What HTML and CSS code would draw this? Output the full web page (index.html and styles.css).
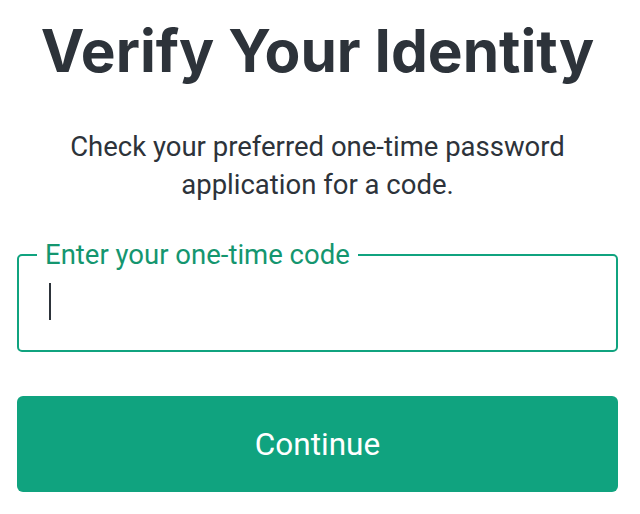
FILE: index.html
```html
<!DOCTYPE html>
<html lang="en">
<head>
  <meta charset="UTF-8" />
  <meta name="viewport" content="width=device-width, initial-scale=1.0"/>
  <title>Verify Your Identity</title>
  <link rel="stylesheet" href="styles.css">
</head>
<body>

  <div class="verify">
    <h1>Verify Your Identity</h1>
    <p class="hint">Check your preferred one-time password application for a code.</p>

    <fieldset class="code-field">
      <legend>Enter your one-time code</legend>
      <span class="caret"></span>
    </fieldset>

    <button class="continue">Continue</button>
  </div>

</body>
</html>
```

FILE: styles.css
```css
body {
  margin: 0;
  background: #ffffff;
  font-family: Roboto, "Liberation Sans", sans-serif;
}
.verify {
  display: flex;
  flex-direction: column;
  align-items: stretch;
  padding: 0 22px 0 17px;
}
h1 {
  margin: 16px 0 0;
  font-family: Inter, "Liberation Sans", sans-serif;
  font-weight: 700;
  font-size: 58.5px;
  line-height: 70px;
  color: #2d333a;
  text-align: center;
}
.hint {
  margin: 42px auto 0;
  width: 540px;
  font-size: 27.5px;
  line-height: 38px;
  color: #2d333a;
  text-align: center;
}
.code-field {
  margin: 36px 0 0;
  padding: 0 18px;
  height: 108px;
  border: 2px solid #10a37f;
  border-radius: 5px;
}
.code-field legend {
  margin-left: 0;
  padding: 0 8px;
  font-size: 27.5px;
  line-height: 30px;
  color: #14966f;
}
.caret {
  display: block;
  margin: 13px 0 0 12px;
  width: 2px;
  height: 37px;
  background: #2d333a;
}
.continue {
  margin-top: 44px;
  height: 96px;
  border: none;
  border-radius: 6px;
  background: #10a37f;
  color: #ffffff;
  font-family: Roboto, "Liberation Sans", sans-serif;
  font-size: 31.5px;
}
```
